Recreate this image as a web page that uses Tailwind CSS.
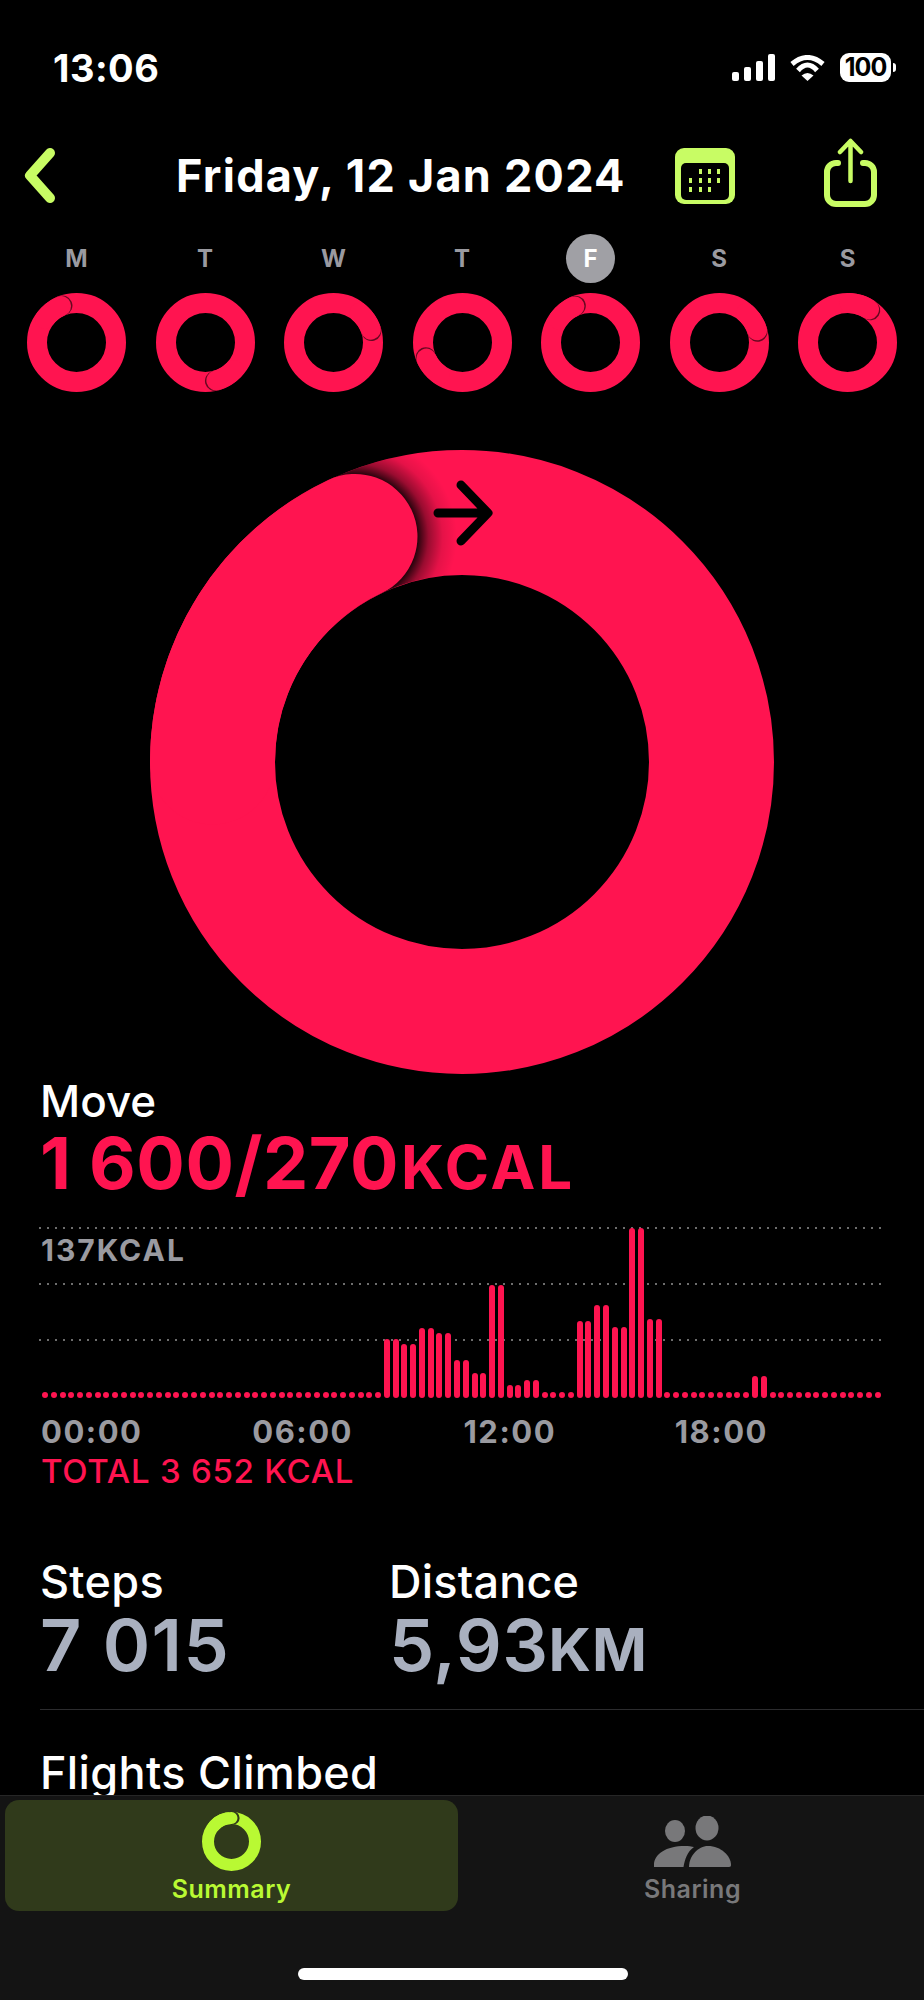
<!DOCTYPE html>
<html lang="en">
<head>
<meta charset="UTF-8">
<title>Activity Summary</title>
<script src="https://cdn.jsdelivr.net/npm/@tailwindcss/browser@4"></script>
</head>
<body class="bg-black text-white font-['Inter',sans-serif]">
<div class="w-[924px] h-[2000px] flex flex-col overflow-hidden">

  <main class="h-[1795px] overflow-hidden">
    <!-- status bar -->
    <div class="h-[135px] pl-[53px] pr-[28px] flex items-center justify-between">
      <span class="text-[38px] leading-[44px] font-bold tracking-[0.5px]">13:06</span>
      <div class="flex items-center">
        <div class="flex items-end gap-[4.5px] h-[27px]">
          <div class="w-[7.5px] h-[9px] bg-white rounded-[2px]"></div>
          <div class="w-[7.5px] h-[14px] bg-white rounded-[2px]"></div>
          <div class="w-[7.5px] h-[20px] bg-white rounded-[2px]"></div>
          <div class="w-[7.5px] h-[27px] bg-white rounded-[2px]"></div>
        </div>
        <svg class="ml-[14px]" width="37" height="26" viewBox="0 0 37 26" fill="none">
          <path d="M3 9Q18.5 -4 34 9" stroke="#fff" stroke-width="5"/>
          <path d="M9 15.5Q18.5 4.5 28 15.5" stroke="#fff" stroke-width="5"/>
          <path d="M12.5 20.5Q18.5 15.5 24.5 20.5L18.5 26Z" fill="#fff"/>
        </svg>
        <div class="ml-[14px] w-[51px] h-[29px] bg-white rounded-[9px] flex items-center justify-center text-black text-[25px] leading-none font-bold tracking-[-1px]">100</div>
        <div class="ml-[2px] w-[3px] h-[9px] bg-white rounded-r-full"></div>
      </div>
    </div>

    <!-- header -->
    <div class="h-[81px] flex items-center">
      <svg class="ml-[24px]" width="32" height="55" viewBox="0 0 32 55" fill="none">
        <path d="M26 5L6 27.5L26 50" stroke="#c8fc64" stroke-width="10" stroke-linecap="round" stroke-linejoin="round"/>
      </svg>
      <h1 class="ml-[120px] w-[499px] text-[45px] leading-[54px] font-bold tracking-[1.25px] whitespace-nowrap">Friday, 12 Jan 2024</h1>
      <svg width="60" height="56" viewBox="0 0 60 56">
        <rect width="60" height="56" rx="9" fill="#c8fc64"/>
        <rect x="6" y="15" width="48" height="37" rx="5" fill="#000"/>
        <g fill="#c8fc64">
          <rect x="24" y="21" width="3" height="5"/><rect x="33" y="21" width="3" height="5"/><rect x="42" y="21" width="3" height="5"/>
          <rect x="14" y="30" width="3" height="5"/><rect x="24" y="30" width="3" height="5"/><rect x="33" y="30" width="3" height="5"/><rect x="42" y="30" width="3" height="5"/>
          <rect x="14" y="39" width="3" height="5"/><rect x="24" y="39" width="3" height="5"/><rect x="33" y="39" width="3" height="5"/>
        </g>
      </svg>
      <svg class="ml-[89px] mt-[-5px]" width="54" height="70" viewBox="0 0 54 70" fill="none" stroke="#c8fc64" stroke-linecap="round" stroke-linejoin="round">
        <path d="M14 25H12A9 9 0 0 0 3 34V57A9 9 0 0 0 12 66H41A9 9 0 0 0 50 57V34A9 9 0 0 0 41 25H39" stroke-width="6"/>
        <path d="M26.5 43V4M16 14L26.5 3L37 14" stroke-width="4.5"/>
      </svg>
    </div>

    <!-- week -->
    <div id="week" class="mt-[18px] px-[27px] flex justify-between"></div>

    <!-- big ring -->
    <svg class="mt-[58px] ml-[150px]" width="624" height="624" viewBox="0 0 624 624" fill="none">
      <defs>
        <radialGradient id="capShadow" gradientUnits="userSpaceOnUse" cx="205" cy="87" r="102">
          <stop offset="0.6" stop-color="#000" stop-opacity="0.9"/>
          <stop offset="0.72" stop-color="#000" stop-opacity="0.4"/>
          <stop offset="0.86" stop-color="#000" stop-opacity="0.1"/>
          <stop offset="1" stop-color="#000" stop-opacity="0"/>
        </radialGradient>
        <clipPath id="ringClip">
          <path clip-rule="evenodd" d="M312 0A312 312 0 1 1 312 624A312 312 0 1 1 312 0ZM312 125A187 187 0 1 0 312 499A187 187 0 1 0 312 125Z"/>
        </clipPath>
      </defs>
      <circle cx="312" cy="312" r="249.500" stroke="#ff1450" stroke-width="125"/>
      <circle cx="205" cy="87" r="102" fill="url(#capShadow)" clip-path="url(#ringClip)"/>
      <path d="M205 86.500A249.500 249.500 0 0 0 62.500 312" stroke="#ff1450" stroke-width="125" stroke-linecap="round"/>
      <path d="M288 63H337M311 35L338 63L311 91" stroke="#000" stroke-width="9" stroke-linecap="round" stroke-linejoin="round"/>
    </svg>

    <div class="pl-[40px]">
      <p class="mt-[5px] text-[44px] leading-[44px] font-medium">Move</p>
      <p class="mt-[10px] h-[60px] flex items-baseline text-[#ff1450] text-[72px] leading-[60px] font-bold tracking-[0.5px]">1&nbsp;600/270<span class="ml-[2px] text-[60px] tracking-[3px]">KCAL</span></p>

      <!-- hourly chart -->
      <div class="relative mt-[35px] w-[844px] h-[170px]">
        <svg class="absolute left-[-1px] top-[-1px]" width="842" height="114" viewBox="0 0 842 114">
          <path d="M0 1H842M0 57H842M0 113H842" stroke="#6e6e6e" stroke-width="2" stroke-dasharray="2 6"/>
        </svg>
        <span class="absolute left-[1px] top-[4px] text-[#9a9aa0] text-[30px] leading-[36px] font-bold tracking-[2px]">137KCAL</span>
        <div id="bars" class="absolute left-[2px] right-[2px] bottom-0 h-[170px] flex items-end justify-between"></div>
      </div>

      <div class="mt-[18px] ml-[1px] w-[845px] grid grid-cols-4 text-[#9a9aa0] text-[31px] leading-[32px] font-bold tracking-[1.5px]">
        <span>00:00</span><span>06:00</span><span>12:00</span><span>18:00</span>
      </div>
      <p class="mt-[5px] ml-[1px] text-[#ff1450] text-[33px] leading-[36px] font-medium tracking-[0.75px]">TOTAL 3 652 KCAL</p>

      <div class="mt-[71px] flex">
        <div class="w-[349px]">
          <p class="text-[45px] leading-[44px] font-medium tracking-[0.3px]">Steps</p>
          <p class="mt-[5px] text-[#a9b0bf] text-[72px] leading-[72px] font-semibold tracking-[1.5px]">7&nbsp;015</p>
        </div>
        <div>
          <p class="text-[45px] leading-[44px] font-medium tracking-[0.2px]">Distance</p>
          <p class="mt-[5px] text-[#a9b0bf] text-[72px] leading-[72px] font-semibold tracking-[0.5px]">5,93<span class="text-[59px] font-bold tracking-[1px]">KM</span></p>
        </div>
      </div>
      <div class="mt-[23px] h-[1px] bg-[#2c2c2e]"></div>
      <p class="mt-[41px] text-[45px] leading-[44px] font-medium tracking-[0.35px]">Flights Climbed</p>
    </div>
  </main>

  <!-- tab bar -->
  <nav class="relative h-[205px] bg-[#141414] border-t border-[#262626] pt-[4px] pl-[5px] flex">
    <div class="w-[453px] h-[111px] bg-[#303a1b] rounded-[14px] flex flex-col items-center pt-[12px]">
      <svg width="59" height="59" viewBox="0 0 59 59" fill="none">
        <circle cx="29.5" cy="29.5" r="23.5" stroke="#b9f933" stroke-width="12"/>
        <circle cx="31" cy="6" r="6.6" fill="#303a1b"/>
        <path d="M29.5 6A23.5 23.5 0 0 0 12 14" stroke="#b9f933" stroke-width="12" stroke-linecap="round"/>
      </svg>
      <span class="mt-[3px] text-[#b9f933] text-[25px] leading-[30px] font-semibold tracking-[0.5px]">Summary</span>
    </div>
    <div class="w-[461px] pl-[8px] flex flex-col items-center pt-[16px]">
      <svg width="77" height="51" viewBox="0 0 77 51" fill="#78787a">
        <ellipse cx="21" cy="15" rx="10" ry="11"/>
        <ellipse cx="53" cy="12" rx="11.5" ry="12.5"/>
        <path d="M29.5 51C31 43 33 36 40 31C38 30.5 34 30 31 30C12 30 0 38 0 49V51Z"/>
        <path d="M35 51C35 40 44 30 54 30C67 30 77 40 77 49C77 50 76.500 51 75 51Z"/>
      </svg>
      <span class="mt-[7px] text-[#78787a] text-[25px] leading-[30px] font-semibold tracking-[0.5px]">Sharing</span>
    </div>
    <div class="absolute left-[298px] top-[172px] w-[330px] h-[12px] bg-white rounded-full"></div>
  </nav>
</div>

<script>
  // day letter + angle of the ring head, clockwise from 12 o'clock
  var days = [['M', -23], ['T', 164], ['W', 71], ['T', 246], ['F', -24], ['S', 72], ['S', 33]];
  var week = document.getElementById('week');
  days.forEach(function (d, i) {
    var active = i === 4;
    week.innerHTML +=
      '<div class="w-[99px] flex flex-col items-center">' +
        '<div class="w-[49px] h-[49px] rounded-full flex items-center justify-center text-[24px] font-bold ' +
        (active ? 'bg-[#a0a0a5] text-white' : 'text-[#9a9aa0]') + '">' + d[0] + '</div>' +
        '<svg class="mt-[10px]" width="99" height="99" viewBox="0 0 99 99" fill="none">' +
          '<circle cx="49.5" cy="49.5" r="39.5" stroke="#ff1450" stroke-width="20"/>' +
          '<g transform="rotate(' + d[1] + ' 49.5 49.5)">' +
            '<circle cx="51" cy="10" r="10" fill="#000" fill-opacity="0.6"/>' +
            '<path d="M49.5 10A39.5 39.5 0 0 0 29.75 15.3" stroke="#ff1450" stroke-width="20" stroke-linecap="round"/>' +
          '</g>' +
        '</svg>' +
      '</div>';
  });

  // 96 quarter hours, bar heights in px; anything not listed is a 6px dot
  var tall = {39:59,40:59,41:54,42:54,43:70,44:70,45:65,46:65,47:38,48:38,49:25,50:25,51:113,52:113,53:13,54:13,55:18,56:18,
              61:77,62:77,63:93,64:93,65:71,66:71,67:170,68:170,69:79,70:79,81:22,82:22};
  var bars = '';
  for (var i = 0; i < 96; i++) {
    bars += '<div class="w-[6px] bg-[#ff1450] rounded-full" style="height:' + (tall[i] || 6) + 'px"></div>';
  }
  document.getElementById('bars').innerHTML = bars;
</script>
</body>
</html>
